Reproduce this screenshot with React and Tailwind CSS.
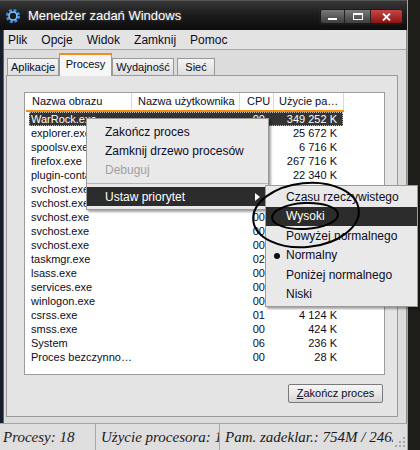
import React from 'react';

// wiersze 6-14: kolumna pamięci zasłonięta przez podmenu, zostawiona pusta
const procesy = [
    ['WarRock.exe', '00', '349 252 K'],
    ['explorer.exe', '', '25 672 K'],
    ['spoolsv.exe', '', '6 716 K'],
    ['firefox.exe', '', '267 716 K'],
    ['plugin-contai…', '', '22 340 K'],
    ['svchost.exe', '', ''],
    ['svchost.exe', '', ''],
    ['svchost.exe', '00', ''],
    ['svchost.exe', '00', ''],
    ['svchost.exe', '00', ''],
    ['taskmgr.exe', '02', ''],
    ['lsass.exe', '00', ''],
    ['services.exe', '00', ''],
    ['winlogon.exe', '00', ''],
    ['csrss.exe', '01', '4 124 K'],
    ['smss.exe', '00', '424 K'],
    ['System', '06', '236 K'],
    ['Proces bezczynno…', '00', '28 K'],
];

function IkonaTytulu() {
    return (
        <svg width="16" height="16" viewBox="0 0 16 16">
            <circle cx="8" cy="8" r="5.5" fill="none" stroke="#3d8fe0" strokeWidth="3.2" strokeDasharray="2.6 1.7" />
            <circle cx="8" cy="8" r="4" fill="none" stroke="#7fc0ff" strokeWidth="1.6" />
            <circle cx="8" cy="8" r="2" fill="#1c1c1c" />
        </svg>
    );
}

function PrzyciskiOkna() {
    return (
        <div className="flex h-[15px] rounded-[3px] border border-[#1a1a1a] overflow-hidden shadow-[0_0_1px_rgba(255,255,255,0.3)]">
            <div className="w-[24px] flex items-end justify-center pb-[3px] bg-gradient-to-b from-[#7a7a7a] to-[#3e3e3e] border-r border-[#222]">
                <div className="w-[9px] h-[2px] bg-white" />
            </div>
            <div className="w-[26px] flex items-center justify-center bg-gradient-to-b from-[#7a7a7a] to-[#3e3e3e] border-r border-[#222]">
                <div className="w-[10px] h-[7px] border border-white border-t-2" />
            </div>
            <div className="w-[31px] flex items-center justify-center bg-gradient-to-b from-[#c94646] to-[#8a1212]">
                <svg width="9" height="8" viewBox="0 0 9 8">
                    <path d="M1 0.5 L8 7.5 M8 0.5 L1 7.5" stroke="white" strokeWidth="1.8" />
                </svg>
            </div>
        </div>
    );
}

export default function App() {
    return (
        <div className="relative w-[420px] h-[450px] overflow-hidden bg-[#1f1e1a] font-['Liberation_Sans',Arial,sans-serif] text-[#0c0c22]">
            <div className="w-[408px] h-full flex flex-col border-r border-[#e39a36] bg-[#dcdcdc]">
                {/* pasek tytułu */}
                <div className="h-[30px] flex items-center bg-gradient-to-b from-[#363636] via-[#1b1b1b] to-[#0d0d0d] border-t border-[#555] pl-[5px] pr-[4px]">
                    <IkonaTytulu />
                    <span className="ml-[7px] text-[13px] text-white [text-shadow:0_0_3px_rgba(255,255,255,0.35)]">Menedżer zadań Windows</span>
                    <div className="ml-auto mt-[2px]">
                        <PrzyciskiOkna />
                    </div>
                </div>

                <div className="flex-1 flex">
                    <div className="w-[4px] bg-[#16202c] border-r border-[#5a6470]" />
                    <div className="flex-1 flex flex-col border-r border-[#8e8e8e]">
                        {/* menu */}
                        <div className="h-[20px] flex items-center gap-[14px] pl-[4px] bg-[#e3e3e3] border-b border-[#a8a8a8] text-[12px]">
                            <span>Plik</span>
                            <span>Opcje</span>
                            <span>Widok</span>
                            <span>Zamknij</span>
                            <span>Pomoc</span>
                        </div>

                        {/* zakładki */}
                        <div className="h-[25px] flex items-end pl-[3px] text-[11px]">
                            <div className="w-[52px] h-[17px] flex items-center justify-center border border-b-0 border-[#9a9a9a] bg-gradient-to-b from-[#f4f4f4] to-[#dedede]">Aplikacje</div>
                            <div className="relative z-10 w-[53px] h-[23px] -mb-[1px] flex items-center justify-center pb-[2px] border-x border-[#9a9a9a] border-t-2 border-t-[#f08c1c] bg-[#f6f6f6]">Procesy</div>
                            <div className="w-[62px] h-[17px] flex items-center justify-center border border-b-0 border-[#9a9a9a] bg-gradient-to-b from-[#f4f4f4] to-[#dedede]">Wydajność</div>
                            <div className="ml-[3px] w-[38px] h-[17px] flex items-center justify-center border border-b-0 border-[#9a9a9a] bg-gradient-to-b from-[#f4f4f4] to-[#dedede]">Sieć</div>
                        </div>

                        {/* panel */}
                        <div className="ml-[2px] mr-[8px] h-[342px] flex flex-col border border-[#9a9a9a] bg-[#e4e4e4] pt-[16px] pl-[17px] pr-[12px] pb-[13px]">
                            <div className="h-[283px] bg-white border border-[#9c9c9c] pl-[1px] text-[11px]">
                                <div className="w-[318px] h-[19px] flex border-b-2 border-[#f78c0c]">
                                    <div className="w-[106px] pl-[6px] flex items-center border-r border-[#dadada]">Nazwa obrazu</div>
                                    <div className="w-[108px] pl-[6px] flex items-center border-r border-[#dadada] whitespace-nowrap overflow-hidden">Nazwa użytkownika</div>
                                    <div className="w-[34px] pl-[7px] flex items-center border-r border-[#dadada]">CPU</div>
                                    <div className="w-[70px] pl-[5px] flex items-center border-r border-[#dadada] whitespace-nowrap">Użycie pa…</div>
                                </div>
                                {procesy.map(([nazwa, cpu, pamiec], i) => (
                                    <div
                                        key={i}
                                        className={
                                            i === 0
                                                ? 'ml-[3px] w-[314px] h-[14px] flex items-center bg-[#343434] text-white outline-1 outline-dotted outline-[#bbbbbb] -outline-offset-1'
                                                : 'ml-[3px] w-[314px] h-[14px] flex items-center'
                                        }
                                    >
                                        <div className="w-[102px] pl-[2px] whitespace-nowrap overflow-hidden">{nazwa}</div>
                                        <div className="w-[108px]" />
                                        <div className="w-[34px] text-right pr-[8px]">{cpu}</div>
                                        <div className="w-[70px] text-right pr-[6px] whitespace-nowrap">{pamiec}</div>
                                    </div>
                                ))}
                            </div>
                            <div className="flex justify-end mt-[9px] mr-[2px]">
                                <button className="w-[95px] h-[19px] text-[11px] rounded-[2px] border border-[#7a7a7a] bg-gradient-to-b from-[#f6f6f6] via-[#e8e8e8] to-[#d4d4d4] text-[#0c0c22]">
                                    <span className="underline">Z</span>akończ proces
                                </button>
                            </div>
                        </div>
                        <div className="flex-1" />
                    </div>
                </div>

                {/* pasek stanu */}
                <div className="h-[27px] flex items-center bg-[#dedede] border-t border-[#a4a4a4] font-['Liberation_Serif',serif] italic text-[15px] text-[#1a1a1a]">
                    <div className="w-[96px] h-full pl-[3px] flex items-center border-r border-[#a8a8a8] whitespace-nowrap overflow-hidden">Procesy: 18</div>
                    <div className="w-[124px] h-full pl-[5px] flex items-center border-r border-[#a8a8a8] whitespace-nowrap overflow-hidden">Użycie procesora: 1%</div>
                    <div className="flex-1 h-full pl-[5px] flex items-center whitespace-nowrap overflow-hidden">Pam. zadeklar.: 754M / 2463M</div>
                    <div className="w-[14px] h-full flex items-end justify-center pb-[2px]">
                        <svg width="11" height="11" viewBox="0 0 11 11">
                            <g fill="#a8a8a8">
                                <rect x="8" y="0" width="2" height="2" />
                                <rect x="4" y="4" width="2" height="2" />
                                <rect x="8" y="4" width="2" height="2" />
                                <rect x="0" y="8" width="2" height="2" />
                                <rect x="4" y="8" width="2" height="2" />
                                <rect x="8" y="8" width="2" height="2" />
                            </g>
                        </svg>
                    </div>
                </div>
            </div>

            {/* menu kontekstowe */}
            <div className="absolute left-[86px] top-[118px] w-[183px] bg-[#e9e9e9] border border-[#9a9a9a] py-[3px] text-[12px] shadow-[2px_2px_2px_rgba(0,0,0,0.35)]">
                <div className="h-[19px] pl-[18px] flex items-center">Zakończ proces</div>
                <div className="h-[19px] pl-[18px] flex items-center">Zamknij drzewo procesów</div>
                <div className="h-[19px] pl-[18px] flex items-center text-[#a0a0a0]">Debuguj</div>
                <div className="h-[8px] flex items-center">
                    <div className="w-full h-[1px] bg-[#b4b4b4]" />
                </div>
                <div className="h-[19px] pl-[18px] pr-[8px] flex items-center bg-[#2c2c2c] text-white">
                    <span>Ustaw priorytet</span>
                    <svg className="ml-auto" width="5" height="8" viewBox="0 0 5 8">
                        <path d="M0 0 L5 4 L0 8 Z" fill="white" />
                    </svg>
                </div>
            </div>

            {/* podmenu */}
            <div className="absolute left-[265px] top-[185px] w-[153px] bg-[#e9e9e9] border border-[#9a9a9a] pt-[1px] pb-[2px] text-[12px] shadow-[2px_2px_2px_rgba(0,0,0,0.35)]">
                <div className="h-[19.5px] pl-[20px] flex items-center">Czasu rzeczywistego</div>
                <div className="h-[19.5px] pl-[20px] flex items-center bg-[#2c2c2c] text-white">Wysoki</div>
                <div className="h-[19.5px] pl-[20px] flex items-center">Powyżej normalnego</div>
                <div className="relative h-[19.5px] pl-[20px] flex items-center">
                    <span className="absolute left-[8px] top-[7px] w-[6px] h-[6px] rounded-full bg-[#111]" />
                    Normalny
                </div>
                <div className="h-[19.5px] pl-[20px] flex items-center">Poniżej normalnego</div>
                <div className="h-[19.5px] pl-[20px] flex items-center">Niski</div>
            </div>

            {/* zaznaczenie odręczne */}
            <svg className="absolute left-0 top-0 pointer-events-none" width="420" height="450" viewBox="0 0 420 450">
                <ellipse cx="306" cy="215" rx="53" ry="32" transform="rotate(-6 306 215)" fill="none" stroke="#000" strokeWidth="2" />
                <ellipse cx="305" cy="216" rx="33" ry="13" transform="rotate(-3 305 216)" fill="none" stroke="#000" strokeWidth="2" />
            </svg>
        </div>
    );
}
